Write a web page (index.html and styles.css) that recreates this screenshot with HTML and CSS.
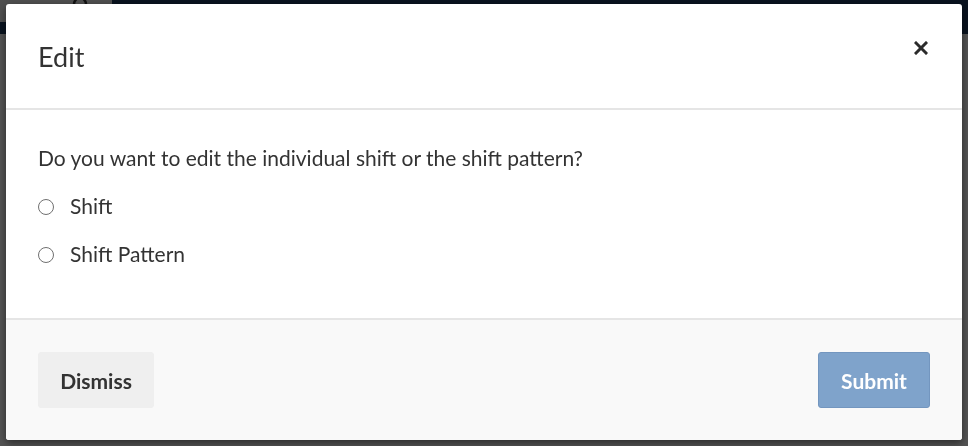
FILE: index.html
```html
<!DOCTYPE html>
<html lang="en">
<head>
<meta charset="utf-8">
<title>Edit</title>
<link rel="stylesheet" href="styles.css">
</head>
<body>
<div class="page">
  <div class="topbar">
    <div class="search">
      <svg class="search-icon" width="20" height="20" viewBox="0 0 20 20"><circle cx="8" cy="8" r="6" fill="none" stroke="#333" stroke-width="2.5"/><path d="M12.5 12.5 L18 18" stroke="#333" stroke-width="3" stroke-linecap="round"/></svg>
    </div>
  </div>
  <div class="content"></div>
</div>
<div class="overlay">
  <div class="modal">
    <div class="modal-header">
      <h2 class="modal-title">Edit</h2>
      <button class="close" aria-label="Close">
        <svg width="14" height="14" viewBox="0 0 14 14"><path d="M2 2 L12 12 M12 2 L2 12" stroke="#2b2b2b" stroke-width="3" stroke-linecap="square"/></svg>
      </button>
    </div>
    <div class="modal-body">
      <p class="question">Do you want to edit the individual shift or the shift pattern?</p>
      <label class="option"><span class="radio"></span><span class="option-label">Shift</span></label>
      <label class="option"><span class="radio"></span><span class="option-label">Shift Pattern</span></label>
    </div>
    <div class="modal-footer">
      <button class="btn btn-default">Dismiss</button>
      <button class="btn btn-primary">Submit</button>
    </div>
  </div>
</div>
</body>
</html>
```
FILE: styles.css
```css
html, body {
  margin: 0;
  padding: 0;
  height: 100%;
}
body {
  font-family: Lato, "Noto Sans", sans-serif;
  background: #ffffff;
  overflow: hidden;
}
.page {
  height: 100%;
  display: flex;
  flex-direction: column;
}
.topbar {
  height: 34px;
  background: #1b365a;
  display: flex;
}
.search {
  width: 112px;
  height: 22px;
  background: #e8e8e8;
}
.search-icon {
  margin-left: 72px;
  margin-top: -10px;
}
.content {
  flex: 1;
  background: #f4f4f4;
}
.overlay {
  position: fixed;
  inset: 0;
  background: rgba(0, 0, 0, 0.66);
  padding: 4px 6px 6px 6px;
  box-sizing: border-box;
}
.modal {
  background: #ffffff;
  border-radius: 3px;
  height: 436px;
  display: flex;
  flex-direction: column;
  overflow: hidden;
  box-shadow: 0 3px 9px rgba(0,0,0,0.5);
}
.modal-header {
  flex: none;
  height: 106px;
  box-sizing: border-box;
  border-bottom: 2px solid #e5e5e5;
  display: flex;
  align-items: center;
  justify-content: space-between;
  padding: 0 32px 0 32px;
}
.modal-title {
  margin: 0;
  font-weight: 400;
  font-size: 27px;
  color: #333333;
  line-height: 1;
}
.close {
  border: 0;
  background: transparent;
  padding: 0;
  width: 14px;
  height: 14px;
  display: flex;
  margin-top: -16px;
  margin-right: 2px;
}
.modal-body {
  flex: 1;
  padding: 36px 32px 0 32px;
  display: flex;
  flex-direction: column;
  color: #333333;
  font-size: 21px;
}
.question {
  margin: 0 0 24px 0;
  line-height: 24px;
}
.option {
  display: flex;
  align-items: center;
  gap: 16px;
  height: 24px;
  margin-bottom: 24px;
}
.option-label {
  margin-top: -1px;
}
.radio {
  width: 14px;
  height: 14px;
  border: 1px solid #707070;
  border-radius: 50%;
  background: #fff;
  flex: none;
  margin-top: 2px;
}
.modal-footer {
  flex: none;
  height: 122px;
  box-sizing: border-box;
  border-top: 2px solid #e5e5e5;
  background: #f9f9f9;
  display: flex;
  align-items: center;
  justify-content: space-between;
  padding: 0 32px;
}
.btn {
  font-family: Lato, "Noto Sans", sans-serif;
  font-size: 21px;
  font-weight: 700;
  height: 56px;
  border-radius: 3px;
  padding: 0;
  cursor: pointer;
}
.btn-default {
  background: #efefef;
  border: 1px solid #efefef;
  color: #333333;
  width: 116px;
}
.btn-primary {
  background: #7fa3cb;
  border: 1px solid #7396bf;
  color: #ffffff;
  width: 112px;
}
```
